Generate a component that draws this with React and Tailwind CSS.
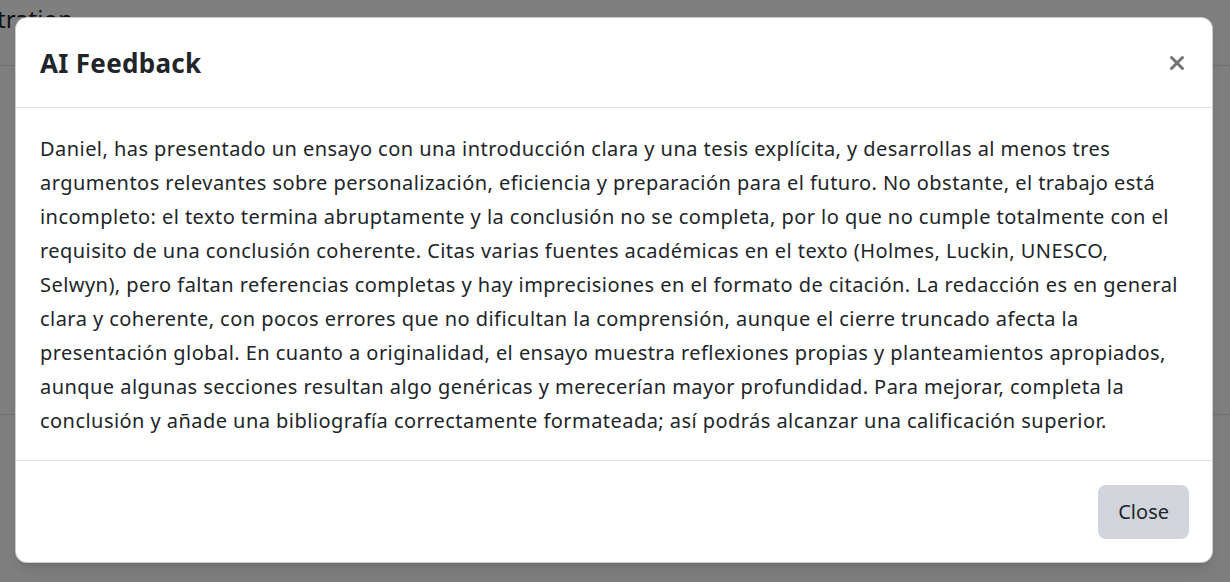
import { X } from 'lucide-react';

const lines = [
  'Daniel, has presentado un ensayo con una introducción clara y una tesis explícita, y desarrollas al menos tres',
  'argumentos relevantes sobre personalización, eficiencia y preparación para el futuro. No obstante, el trabajo está',
  'incompleto: el texto termina abruptamente y la conclusión no se completa, por lo que no cumple totalmente con el',
  'requisito de una conclusión coherente. Citas varias fuentes académicas en el texto (Holmes, Luckin, UNESCO,',
  'Selwyn), pero faltan referencias completas y hay imprecisiones en el formato de citación. La redacción es en general',
  'clara y coherente, con pocos errores que no dificultan la comprensión, aunque el cierre truncado afecta la',
  'presentación global. En cuanto a originalidad, el ensayo muestra reflexiones propias y planteamientos apropiados,',
  'aunque algunas secciones resultan algo genéricas y merecerían mayor profundidad. Para mejorar, completa la',
  'conclusión y añade una bibliografía correctamente formateada; así podrás alcanzar una calificación superior.',
];

export default function App() {
  return (
    <div className="relative h-[582px] w-full overflow-hidden bg-white font-['Noto_Sans',sans-serif] text-[#212529]">
      {/* page behind the modal */}
      <div className="h-[66px] border-b border-[#dee2e6]">
        <div className="-ml-[3px] pt-[3px] text-[24px] leading-[32px]">tration</div>
      </div>
      <div className="h-[349px] border-b border-[#dee2e6]" />

      {/* backdrop + dialog */}
      <div className="absolute inset-0 flex items-start justify-center bg-black/50 pl-[15px] pr-[17px] pt-[17px]">
        <div className="w-full rounded-xl border border-black/20 bg-white shadow-lg">
          <div className="flex h-[90px] items-center justify-between border-b border-[#dee2e6] pl-6 pr-[23px]">
            <h2 className="text-[26px] font-bold leading-none tracking-[0.3px]">AI Feedback</h2>
            <button className="flex h-6 w-6 items-center justify-center text-[#747474]">
              <X className="h-[22px] w-[22px]" strokeWidth={3.3} />
            </button>
          </div>
          <div className="px-6 pt-6 pb-[22px] text-[20px] leading-[34px] tracking-[0.45px]">
            {lines.map((l, i) => (
              <div key={i} className="whitespace-nowrap">{l}</div>
            ))}
          </div>
          <div className="flex justify-end border-t border-[#dee2e6] pl-6 pr-[23px] pt-6 pb-[23px]">
            <button className="h-[54px] rounded-lg bg-[#d1d5db] px-5 text-[20px] text-[#212529]">Close</button>
          </div>
        </div>
      </div>
    </div>
  );
}
